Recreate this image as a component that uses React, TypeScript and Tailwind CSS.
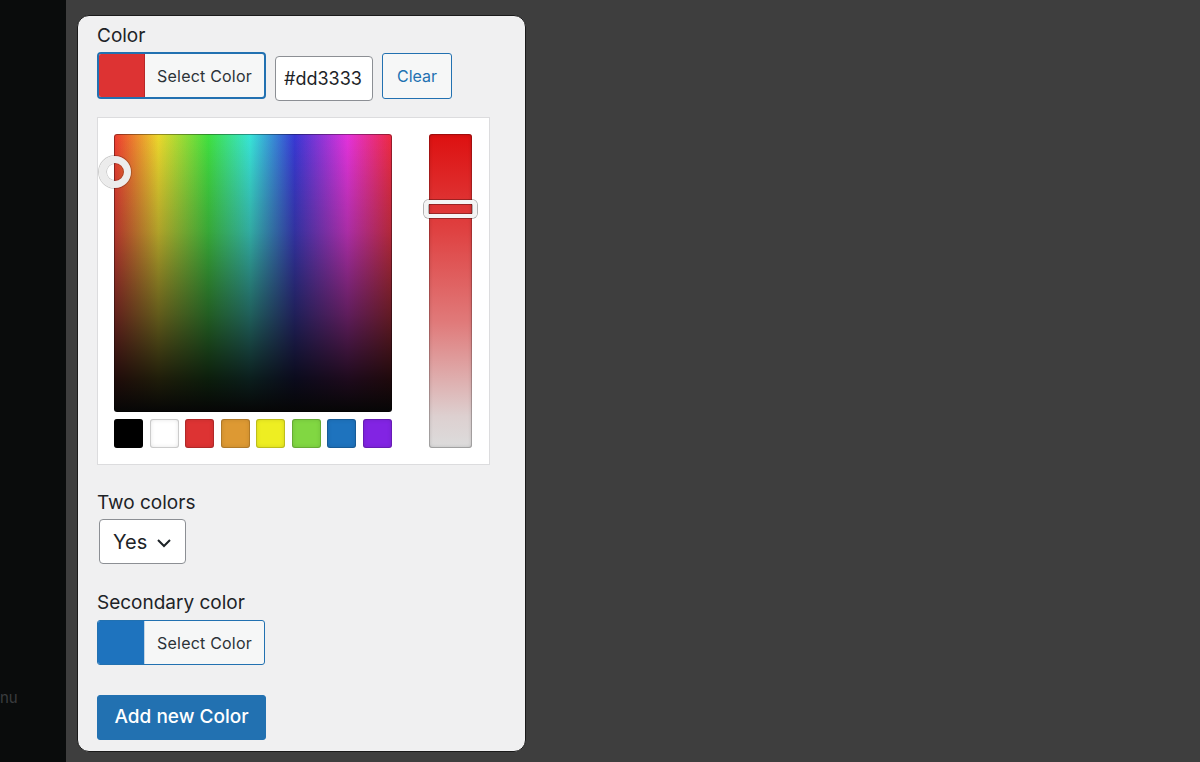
import { useState } from 'react'

const swatches = ['#000000', '#ffffff', '#dd3333', '#dd9933', '#eeee22', '#81d742', '#1e73be', '#8224e3']

const hueGradient =
  'linear-gradient(to right, #ee3a30 0%, #ecd82c 16%, #40e040 34%, #38e4d8 49%, #3838d4 65%, #e432dc 84%, #ee2a40 100%)'

function SelectColorButton({ color, focused }: { color: string; focused?: boolean }) {
  return (
    <button
      className={
        focused
          ? 'flex h-[47px] w-[169px] overflow-hidden rounded-[4px] border-2 border-[#2271b1] bg-[#f6f7f7]'
          : 'flex h-[45px] w-[168px] overflow-hidden rounded-[3px] border border-[#2271b1] bg-[#f6f7f7]'
      }
    >
      <span
        className={focused ? 'h-full w-[46px] border-r border-[#b82828]' : 'h-full w-[47px] border-r border-[#c3d4e4]'}
        style={{ backgroundColor: color }}
      />
      <span className="flex h-full flex-1 items-center justify-center text-[16px] tracking-[0.2px] text-[#2c3338]">
        Select Color
      </span>
    </button>
  )
}

export default function App() {
  const [hex, setHex] = useState('#dd3333')

  return (
    <div className="flex h-[762px] w-[1200px] overflow-hidden font-['Inter','Liberation_Sans',sans-serif]">
      <aside className="flex h-full w-[66px] flex-col overflow-hidden bg-[#0a0c0c]">
        <div className="mt-[686px] text-[15px] leading-[24px] text-[#3a3d3f]">nu</div>
      </aside>

      <main className="flex-1 bg-[#3e3e3e] pl-[11px] pt-[15px]">
        <div className="flex h-[737px] w-[449px] flex-col rounded-[12px] border border-[#1a1a1a] bg-[#f0f0f1] pl-[19px] pt-[8px]">
          <label className="text-[19px] leading-[24px] text-[#1d2327]">Color</label>

          <div className="mt-[4px] flex items-start gap-[9px]">
            <SelectColorButton color="#dd3333" focused />
            <input
              value={hex}
              onChange={(e) => setHex(e.target.value)}
              className="mt-[4px] h-[45px] w-[98px] rounded-[4px] border border-[#8c8f94] bg-white px-[8px] text-[18px] text-[#1d2327] outline-none"
            />
            <button className="mt-[1px] h-[46px] w-[70px] rounded-[3px] border border-[#2271b1] bg-[#f6f7f7] text-[16px] text-[#2271b1]">
              Clear
            </button>
          </div>

          {/* iris picker */}
          <div className="mt-[16px] flex w-[393px] border border-[#dcdcde] bg-white pb-[16px] pl-[16px] pr-[17px] pt-[16px]">
            <div className="flex w-[278px] flex-col">
              <div className="relative h-[278px] w-[278px]">
                <div
                  className="h-full w-full rounded-[3px] shadow-[inset_0_0_0_1px_rgba(0,0,0,0.35)]"
                  style={{
                    backgroundImage: `linear-gradient(to bottom, rgba(0,0,0,0) 0%, rgba(0,0,0,0.22) 35%, rgba(0,0,0,0.55) 65%, rgba(0,0,0,0.85) 88%, #060606 100%), linear-gradient(to bottom, rgba(130,130,130,0) 0%, rgba(130,130,130,0.28) 100%), ${hueGradient}`,
                  }}
                />
                <span className="absolute left-[-15px] top-[22px] h-[32px] w-[32px] rounded-full border-[7px] border-[#ececec] shadow-[0_0_0_1px_rgba(0,0,0,0.2),inset_0_0_0_1px_rgba(0,0,0,0.2)]" />
              </div>
              <div className="mt-[7px] flex justify-between">
                {swatches.map((c) => (
                  <span
                    key={c}
                    className="h-[29px] w-[29px] rounded-[3px] shadow-[inset_0_0_0_1px_rgba(0,0,0,0.15),inset_0_0_5px_rgba(0,0,0,0.15)]"
                    style={{ backgroundColor: c }}
                  />
                ))}
              </div>
            </div>

            <div className="relative ml-[37px] w-[43px]">
              <div className="h-full w-full rounded-[3px] bg-[linear-gradient(to_bottom,#dd1010_0%,#df4040_30%,#e07a7a_60%,#ddd0d0_90%,#dcdcdc_100%)] shadow-[inset_0_0_0_1px_rgba(0,0,0,0.2),inset_0_0_4px_rgba(0,0,0,0.2)]" />
              <span className="absolute left-[-5px] top-[66px] h-[18px] w-[53px] rounded-[5px] border-[4px] border-[#f4f4f4] shadow-[0_0_0_1px_rgba(0,0,0,0.3),inset_0_0_0_1px_rgba(0,0,0,0.3)]" />
            </div>
          </div>

          <label className="mt-[26px] text-[19px] leading-[24px] text-[#1d2327]">Two colors</label>
          <div className="ml-[2px] mt-[4px] flex h-[45px] w-[87px] items-center rounded-[4px] border border-[#8c8f94] bg-white pl-[13px] text-[20px] text-[#1d2327]">
            <span>Yes</span>
            <svg className="ml-[9px] mt-[2px]" width="16" height="10" viewBox="0 0 16 10" fill="none">
              <path d="M2 2l6 6 6-6" stroke="#1d2327" strokeWidth="2" />
            </svg>
          </div>

          <label className="mt-[27px] text-[19px] leading-[24px] text-[#1d2327]">Secondary color</label>
          <div className="mt-[5px]">
            <SelectColorButton color="#1e73be" />
          </div>

          <div className="mt-[30px]">
            <button className="h-[45px] w-[169px] rounded-[3px] border border-[#2271b1] bg-[#2271b1] text-[19px] font-medium text-white">
              Add new Color
            </button>
          </div>
        </div>
      </main>
    </div>
  )
}
